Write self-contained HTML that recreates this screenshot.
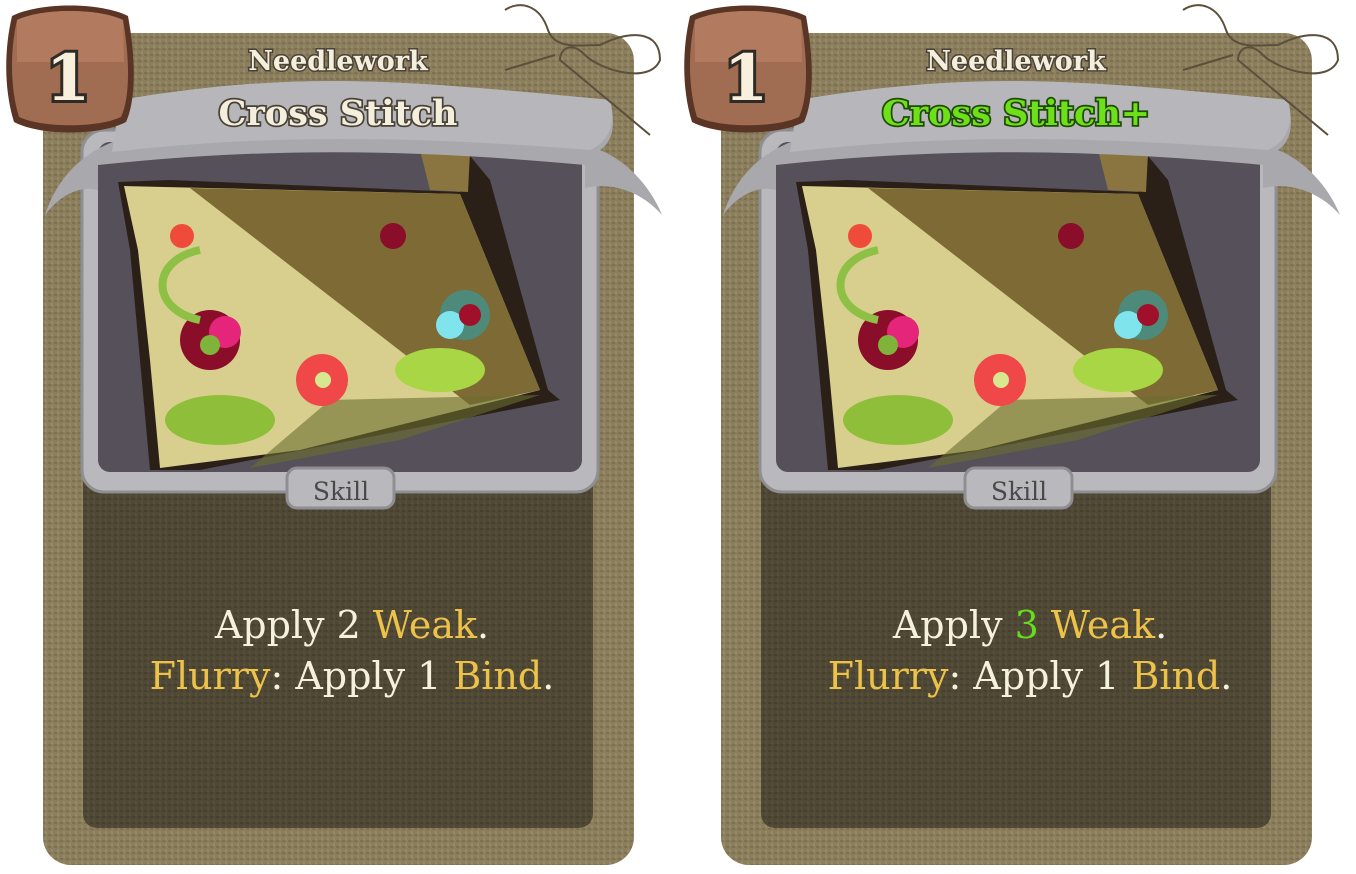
<!DOCTYPE html>
<html><head><meta charset="utf-8"><style>
html,body{margin:0;padding:0;background:#fff;width:1356px;height:874px;overflow:hidden}
svg{display:block}
</style></head><body>
<svg width="1356" height="874" viewBox="0 0 1356 874" xmlns="http://www.w3.org/2000/svg">
<defs>
<pattern id="burlap" width="6" height="6" patternUnits="userSpaceOnUse">
<rect width="6" height="6" fill="#8b7e5c"/><rect width="3" height="2" fill="#7d7152"/><rect x="3" y="3" width="2" height="3" fill="#978a68"/>
</pattern>
<pattern id="burlapd" width="6" height="6" patternUnits="userSpaceOnUse">
<rect width="6" height="6" fill="#4f4834"/><rect width="3" height="2" fill="#474030"/><rect x="3" y="3" width="2" height="3" fill="#564f3a"/>
</pattern>
<g id="base">
<rect x="43" y="33" width="591" height="832" rx="28" fill="url(#burlap)"/>
<rect x="83" y="470" width="510" height="358" rx="14" fill="url(#burlapd)"/>
<rect x="82" y="130" width="516" height="362" rx="22" fill="#b9b9bd" stroke="#8e8e93" stroke-width="3"/>
<rect x="98" y="142" width="484" height="330" rx="12" fill="#55505a"/>
<path d="M118 182 L170 180 L460 192 L472 150 L430 148 L465 150 L490 180 L548 390 L560 400 L200 470 L150 470 L140 360 L130 250 Z" fill="#2a2018"/>
<path d="M124 186 L460 194 L540 390 L300 450 L160 468 L150 360 L138 250 Z" fill="#d8cf8e"/>
<path d="M190 188 L460 194 L540 390 L470 405 Z" fill="#7d6a35"/>
<path d="M420 150 L470 152 L468 192 L430 190 Z" fill="#8a7540"/>
<path d="M250 468 L330 400 L540 395 L400 440 Z" fill="#6b6e2e" opacity=".6"/>
<circle cx="210" cy="340" r="30" fill="#8a0d2a"/><circle cx="225" cy="332" r="16" fill="#e5257a"/><circle cx="210" cy="345" r="10" fill="#7fb33a"/>
<circle cx="322" cy="380" r="26" fill="#f04848"/><circle cx="323" cy="380" r="8" fill="#d8e890"/>
<circle cx="182" cy="236" r="12" fill="#ef4b3a"/>
<circle cx="393" cy="236" r="13" fill="#8a0d2a"/>
<circle cx="465" cy="315" r="25" fill="#4e8a7a"/><circle cx="450" cy="325" r="14" fill="#80e4ec"/><circle cx="470" cy="315" r="11" fill="#a0102a"/>
<ellipse cx="440" cy="370" rx="45" ry="22" fill="#a8d645"/>
<ellipse cx="220" cy="420" rx="55" ry="25" fill="#8fbf3a"/>
<path d="M200 250 C150 260 150 310 200 320" stroke="#8ec045" stroke-width="8" fill="none"/>
<path d="M45 215 C60 170 90 150 118 140 L120 100 C300 70 400 80 610 100 C615 120 615 140 600 150 C625 160 650 185 662 215 C640 190 610 182 585 188 L585 165 C400 148 260 148 98 165 L98 190 C80 185 60 195 45 215 Z" fill="#a9a9ad"/>
<path d="M120 100 C300 70 400 80 610 100 C615 120 612 140 590 150 C400 135 260 135 112 152 Z" fill="#b7b7bb"/>
<rect x="287" y="468" width="107" height="40" rx="10" fill="#b9b9bd" stroke="#8e8e93" stroke-width="3"/>
<path d="M12 16 C40 2 100 2 128 16 C136 60 136 100 126 122 C100 136 40 136 14 122 C4 90 4 50 12 16 Z" fill="#5a3424"/>
<path d="M17 20 C42 8 98 8 123 20 C130 60 130 98 121 117 C98 128 42 128 19 117 C10 88 10 50 17 20 Z" fill="#a06c52"/>
<path d="M17 20 C42 8 98 8 123 20 L124 62 L17 62 Z" fill="#b27b60"/>
<path d="M505 10 C520 0 540 5 548 30 C555 50 580 45 600 45 C630 30 660 30 660 60 C650 85 600 70 585 55 C570 40 560 50 560 60 L650 135 M555 55 L505 70" stroke="#5c4f3c" stroke-width="2" fill="none"/>
</g>
</defs>
<g font-family="'DejaVu Serif', serif" text-anchor="middle">
<use href="#base"/>
<use href="#base" x="678"/>
<text x="68" y="100" font-size="64" font-weight="bold" fill="#f8f0dc" stroke="#2e2a26" stroke-width="6" paint-order="stroke">1</text>
<text x="338" y="70" font-size="27" font-weight="bold" fill="#f4eedc" stroke="#4a4238" stroke-width="3" paint-order="stroke">Needlework</text>
<text x="338" y="125" font-size="35" font-weight="bold" fill="#f4eedc" stroke="#4a4238" stroke-width="3.5" paint-order="stroke">Cross Stitch</text>
<text x="341" y="500" font-size="25" fill="#4a4848">Skill</text>
<text x="352" y="638" font-size="38" fill="#f6f0de"><tspan>Apply 2 </tspan><tspan fill="#ecc24a">Weak</tspan>.</text>
<text x="352" y="689" font-size="38" fill="#f6f0de"><tspan fill="#ecc24a">Flurry</tspan>: Apply 1 <tspan fill="#ecc24a">Bind</tspan>.</text>
<text x="746" y="100" font-size="64" font-weight="bold" fill="#f8f0dc" stroke="#2e2a26" stroke-width="6" paint-order="stroke">1</text>
<text x="1016" y="70" font-size="27" font-weight="bold" fill="#f4eedc" stroke="#4a4238" stroke-width="3" paint-order="stroke">Needlework</text>
<text x="1016" y="125" font-size="35" font-weight="bold" fill="#6ee01a" stroke="#1f4a08" stroke-width="3.5" paint-order="stroke">Cross Stitch+</text>
<text x="1019" y="500" font-size="25" fill="#4a4848">Skill</text>
<text x="1030" y="638" font-size="38" fill="#f6f0de"><tspan>Apply </tspan><tspan fill="#66dd1c">3</tspan><tspan> </tspan><tspan fill="#ecc24a">Weak</tspan>.</text>
<text x="1030" y="689" font-size="38" fill="#f6f0de"><tspan fill="#ecc24a">Flurry</tspan>: Apply 1 <tspan fill="#ecc24a">Bind</tspan>.</text>
</g>
</svg>
</body></html>
